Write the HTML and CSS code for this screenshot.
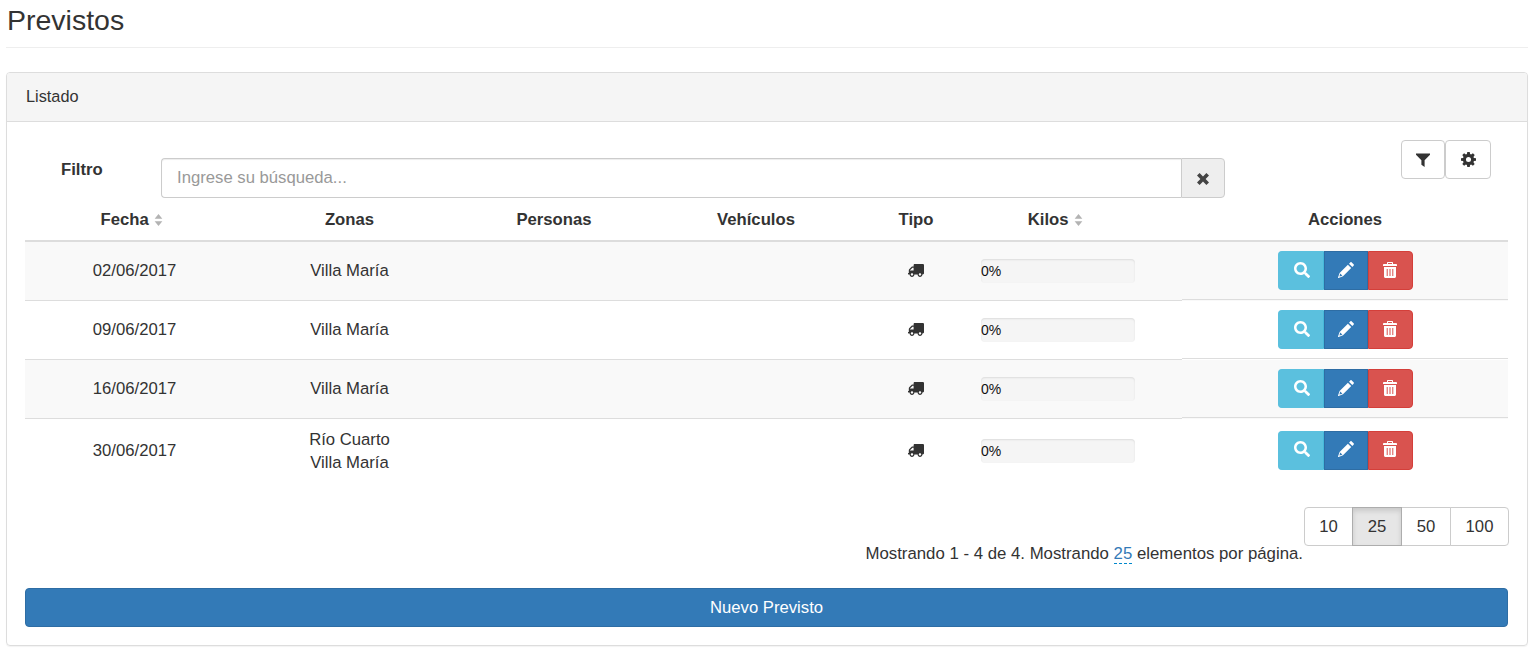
FILE: index.html
```html
<!DOCTYPE html>
<html lang="es">
<head>
<meta charset="utf-8">
<title>Previstos</title>
<link rel="stylesheet" href="styles.css">
</head>
<body>
<svg class="defs" aria-hidden="true">
  <defs>
    <symbol id="i-search" viewBox="0 0 512 512"><path d="M505 442.7L405.3 343c-4.500-4.500-10.600-7-17-7H372c27.600-35.300 44-79.700 44-128C416 93.100 322.900 0 208 0S0 93.100 0 208s93.100 208 208 208c48.300 0 92.700-16.400 128-44v16.300c0 6.400 2.500 12.500 7 17l99.700 99.700c9.400 9.400 24.600 9.400 33.900 0l28.300-28.300c9.400-9.400 9.400-24.600.1-34zM208 336c-70.700 0-128-57.200-128-128 0-70.700 57.200-128 128-128 70.700 0 128 57.200 128 128 0 70.700-57.200 128-128 128z"/></symbol>
    <symbol id="i-pencil" viewBox="0 0 16 16"><path d="M12.300.4c.4-.4 1-.4 1.400 0l1.900 1.900c.4.400.4 1 0 1.400l-1.300 1.300-3.300-3.300zM9.900 2.800l3.300 3.300-8.200 8.200L.6 16c-.4.100-.7-.2-.6-.6l1.600-4.400zM2.300 11.600l-.9 3 3-.9z"/></symbol>
    <symbol id="i-trash" viewBox="0 0 14 16"><path fill-rule="evenodd" d="M5 0h4c.6 0 1 .4 1 1v1h3.200c.4 0 .8.400.8.800V4H0V2.800C0 2.400.4 2 .8 2H4V1c0-.6.400-1 1-1zm0 1v1h4V1zM1 5h12v9.500c0 .8-.7 1.500-1.500 1.500h-9C1.700 16 1 15.300 1 14.500zm2.700 2v7h1V7zm2.800 0v7h1V7zm2.800 0v7h1V7z"/></symbol>
    <symbol id="i-filter" viewBox="0 0 14 14"><path d="M0 .5h14v1.300L8.600 7.300V14L5.400 11.800V7.300L0 1.800z"/></symbol>
    <symbol id="i-cog" viewBox="0 0 16 16"><path fill-rule="evenodd" d="M6.700 0h2.600l.4 2.200 1.100.5L12.700 1.400l1.900 1.900-1.300 1.900.5 1.100 2.200.4v2.600l-2.200.4-.5 1.100 1.300 1.900-1.900 1.900-1.900-1.300-1.100.5-.4 2.200H6.700l-.4-2.200-1.100-.5-1.900 1.300-1.900-1.900 1.300-1.900-.5-1.100L0 9.300V6.700l2.200-.4.5-1.100-1.300-1.900 1.900-1.900 1.900 1.300 1.100-.5zM8 5.300a2.700 2.700 0 1 0 0 5.400 2.700 2.700 0 0 0 0-5.400z"/></symbol>
    <symbol id="i-remove" viewBox="0 0 12 12"><path d="M2.600 0L6 3.400 9.400 0 12 2.600 8.600 6 12 9.400 9.400 12 6 8.600 2.600 12 0 9.400 3.400 6 0 2.600z"/></symbol>
    <symbol id="i-truck" viewBox="0 0 640 512"><path transform="matrix(-1 0 0 1 640 0)" d="M624 352h-16V243.900c0-12.700-5.100-24.900-14.100-33.900L494 110.100c-9-9-21.200-14.100-33.900-14.100H416V48c0-26.500-21.500-48-48-48H48C21.500 0 0 21.500 0 48v320c0 26.500 21.500 48 48 48h16c0 53 43 96 96 96s96-43 96-96h128c0 53 43 96 96 96s96-43 96-96h48c8.800 0 16-7.200 16-16v-32c0-8.800-7.200-16-16-16zM160 464c-26.500 0-48-21.500-48-48s21.500-48 48-48 48 21.500 48 48-21.500 48-48 48zm320 0c-26.500 0-48-21.500-48-48s21.500-48 48-48 48 21.500 48 48-21.500 48-48 48zm80-208H416V144h44.100l99.900 99.900V256z"/></symbol>
    <symbol id="i-sort" viewBox="0 0 10 14"><path d="M5 0l4.500 5.500h-9zM5 14L.5 8.500h9z"/></symbol>
  </defs>
</svg>

<header class="page-header"><h1 class="page-title">Previstos</h1></header>

<section class="panel">
  <div class="panel-heading">Listado</div>
  <div class="panel-body">
    <div class="toolbar">
      <label class="filter-label" for="q">Filtro</label>
      <div class="input-group">
        <input id="q" class="search-input" type="text" placeholder="Ingrese su búsqueda...">
        <span class="addon"><svg class="ico ico-remove"><use href="#i-remove"/></svg></span>
      </div>
      <div class="tool-buttons">
        <button class="tool-btn tool-filter"><svg class="ico ico-filter"><use href="#i-filter"/></svg></button>
        <button class="tool-btn tool-cog"><svg class="ico ico-cog"><use href="#i-cog"/></svg></button>
      </div>
    </div>

    <table class="grid">
      <colgroup>
        <col class="c-fecha"><col class="c-zonas"><col class="c-personas"><col class="c-vehiculos"><col class="c-tipo"><col class="c-kilos"><col class="c-extra"><col class="c-acciones">
      </colgroup>
      <thead>
        <tr>
          <th>Fecha <svg class="ico ico-sort"><use href="#i-sort"/></svg></th>
          <th>Zonas</th>
          <th>Personas</th>
          <th>Vehículos</th>
          <th>Tipo</th>
          <th>Kilos <svg class="ico ico-sort"><use href="#i-sort"/></svg></th>
          <th></th>
          <th>Acciones</th>
        </tr>
      </thead>
      <tbody>
        <tr>
          <td>02/06/2017</td><td class="zones">Villa María</td><td></td><td></td>
          <td><svg class="ico ico-truck"><use href="#i-truck"/></svg></td>
          <td class="kilos"><div class="progress">0%</div></td><td></td>
          <td class="actions"><div class="btn-group">
            <button class="act act-info"><svg class="ico ico-search"><use href="#i-search"/></svg></button><button class="act act-primary"><svg class="ico ico-pencil"><use href="#i-pencil"/></svg></button><button class="act act-danger"><svg class="ico ico-trash"><use href="#i-trash"/></svg></button>
          </div></td>
        </tr>
        <tr>
          <td>09/06/2017</td><td class="zones">Villa María</td><td></td><td></td>
          <td><svg class="ico ico-truck"><use href="#i-truck"/></svg></td>
          <td class="kilos"><div class="progress">0%</div></td><td></td>
          <td class="actions"><div class="btn-group">
            <button class="act act-info"><svg class="ico ico-search"><use href="#i-search"/></svg></button><button class="act act-primary"><svg class="ico ico-pencil"><use href="#i-pencil"/></svg></button><button class="act act-danger"><svg class="ico ico-trash"><use href="#i-trash"/></svg></button>
          </div></td>
        </tr>
        <tr>
          <td>16/06/2017</td><td class="zones">Villa María</td><td></td><td></td>
          <td><svg class="ico ico-truck"><use href="#i-truck"/></svg></td>
          <td class="kilos"><div class="progress">0%</div></td><td></td>
          <td class="actions"><div class="btn-group">
            <button class="act act-info"><svg class="ico ico-search"><use href="#i-search"/></svg></button><button class="act act-primary"><svg class="ico ico-pencil"><use href="#i-pencil"/></svg></button><button class="act act-danger"><svg class="ico ico-trash"><use href="#i-trash"/></svg></button>
          </div></td>
        </tr>
        <tr class="last-row">
          <td>30/06/2017</td><td class="zones">Río Cuarto<br>Villa María</td><td></td><td></td>
          <td><svg class="ico ico-truck"><use href="#i-truck"/></svg></td>
          <td class="kilos"><div class="progress">0%</div></td><td></td>
          <td class="actions"><div class="btn-group">
            <button class="act act-info"><svg class="ico ico-search"><use href="#i-search"/></svg></button><button class="act act-primary"><svg class="ico ico-pencil"><use href="#i-pencil"/></svg></button><button class="act act-danger"><svg class="ico ico-trash"><use href="#i-trash"/></svg></button>
          </div></td>
        </tr>
      </tbody>
    </table>

    <div class="pager">
      <button class="page-btn p-10">10</button><button class="page-btn p-25 active">25</button><button class="page-btn p-50">50</button><button class="page-btn p-100">100</button>
    </div>
    <p class="summary">Mostrando 1 - 4 de 4. Mostrando <a class="summary-link">25</a> elementos por página.</p>

    <button class="new-btn">Nuevo Previsto</button>
  </div>
</section>
</body>
</html>
```

FILE: styles.css
```css
* { box-sizing: border-box; }

html, body { height: 100%; }

body {
  margin: 0;
  padding: 0 7px 0 6px;
  overflow: hidden;
  background: #fff;
  color: #333;
  font-family: "Liberation Sans", Arial, sans-serif;
  font-size: 16.7px;
  line-height: 23px;
}

.defs { display: none; }

.ico { display: inline-block; fill: currentColor; }

.page-header {
  height: 48px;
  border-bottom: 1px solid #eee;
  margin-bottom: 24px;
  padding: 4px 0 0 1px;
}

.page-title {
  margin: 0;
  font-size: 28.500px;
  line-height: 32px;
  font-weight: 400;
}

.panel {
  height: 574px;
  border: 1px solid #ddd;
  border-radius: 4px;
  box-shadow: 0 1px 1px rgba(0, 0, 0, .05);
}

.panel-heading {
  height: 49px;
  padding: 12px 19px 0;
  background: #f5f5f5;
  border-bottom: 1px solid #ddd;
  border-radius: 3px 3px 0 0;
  font-size: 16.300px;
}

.panel-body { padding: 18px 19px 18px 18px; }

.toolbar { display: flex; align-items: flex-start; height: 58px; }

.filter-label {
  width: 136px;
  margin-top: 18px;
  padding-left: 36px;
  font-weight: 700;
}

.input-group {
  display: flex;
  width: 1064px;
  height: 40px;
  margin-top: 18px;
}

.search-input {
  flex: 1;
  min-width: 0;
  padding: 0 15px 2px;
  border: 1px solid #ccc;
  border-right: 0;
  border-radius: 4px 0 0 4px;
  box-shadow: inset 0 1px 1px rgba(0, 0, 0, .075);
  color: #555;
  font: inherit;
  outline: 0;
}

.search-input::placeholder { color: #999; opacity: 1; }

.addon {
  display: flex;
  align-items: center;
  justify-content: center;
  width: 44px;
  background: #eee;
  border: 1px solid #ccc;
  border-radius: 0 4px 4px 0;
  color: #444;
}

.ico-remove { width: 12px; height: 12px; margin-top: 1px; }

.tool-buttons { display: flex; margin-left: 176px; }

.tool-btn {
  display: flex;
  align-items: center;
  justify-content: center;
  height: 39px;
  padding: 0;
  background: #fff;
  border: 1px solid #ccc;
  border-radius: 4px;
  color: #333;
}

.tool-filter { width: 44px; }
.tool-cog { width: 46px; }

.ico-filter { width: 14px; height: 14px; }
.ico-cog { width: 15px; height: 15px; }

.grid {
  width: 100%;
  table-layout: fixed;
  border-collapse: separate;
  border-spacing: 0;
}

.c-fecha { width: 219px; }
.c-zonas { width: 211px; }
.c-personas { width: 198px; }
.c-vehiculos { width: 206px; }
.c-tipo { width: 114px; }
.c-kilos { width: 170px; }
.c-extra { width: 39px; }

.grid th {
  padding: 10px 0 9px;
  border-bottom: 2px solid #ddd;
  font-weight: 700;
  text-align: center;
}

.ico-sort { width: 9px; height: 12px; margin: 0 5px 0 1px; vertical-align: -1px; color: #b3b3b3; }

.grid td {
  padding: 8px 0 9px;
  border-bottom: 1px solid #ddd;
  text-align: center;
  vertical-align: middle;
}

.grid tbody tr:nth-child(odd) { background: #f9f9f9; }

.grid td.kilos { padding-left: 8px; padding-right: 8px; }

.grid td.actions {
  padding: 9px 0 10px;
  border-bottom-color: transparent;
  box-shadow: inset 0 -1px 0 #ddd;
}

.grid .last-row td { border-bottom: 0; }
.grid .last-row td.zones,
.grid .last-row td.kilos { padding-top: 9px; padding-bottom: 8px; }
.grid .last-row td.actions { box-shadow: none; }

.ico-truck { width: 16px; height: 13px; vertical-align: -1px; color: #333; }

.progress {
  height: 24px;
  background: #f5f5f5;
  border-radius: 4px;
  box-shadow: inset 0 1px 2px rgba(0, 0, 0, .1);
  color: #111;
  font-size: 14px;
  line-height: 24px;
  text-align: left;
}

.btn-group { display: flex; justify-content: center; }

.act {
  display: flex;
  align-items: center;
  justify-content: center;
  height: 39px;
  padding: 0 0 2px;
  border: 1px solid;
  color: #fff;
}

.act-info { width: 46px; background: #5bc0de; border-color: #5bc0de #46b8da #5bc0de #5bc0de; border-radius: 4px 0 0 4px; }
.act-primary { width: 44px; background: #337ab7; border-color: #2e6da4; }
.act-danger { width: 45px; background: #d9534f; border-color: #d43f3a; border-radius: 0 4px 4px 0; }

.ico-search { width: 16px; height: 16px; margin-left: 2px; }
.ico-pencil { width: 16px; height: 16px; }
.ico-trash { width: 14px; height: 16px; }

.pager { display: flex; justify-content: flex-end; margin: 25px -1px 0 0; }

.page-btn {
  height: 39px;
  margin-left: -1px;
  padding: 0;
  background: #fff;
  border: 1px solid #ccc;
  color: #333;
  font: inherit;
}

.p-10 { width: 49px; border-radius: 4px 0 0 4px; }
.p-25 { width: 50px; }
.p-50 { width: 50px; }
.p-100 { width: 59px; border-radius: 0 4px 4px 0; }

.page-btn.active {
  position: relative;
  background: #e6e6e6;
  border-color: #adadad;
  box-shadow: inset 0 3px 5px rgba(0, 0, 0, .125);
}

.summary {
  margin: -4px 0 0;
  padding-right: 205px;
  font-size: 16.800px;
  text-align: right;
}

.summary-link {
  color: #337ab7;
  border-bottom: 1px dashed #08c;
}

.new-btn {
  display: block;
  width: 100%;
  height: 39px;
  margin-top: 23px;
  background: #337ab7;
  border: 1px solid #2e6da4;
  border-radius: 4px;
  color: #fff;
  font: inherit;
}
```
